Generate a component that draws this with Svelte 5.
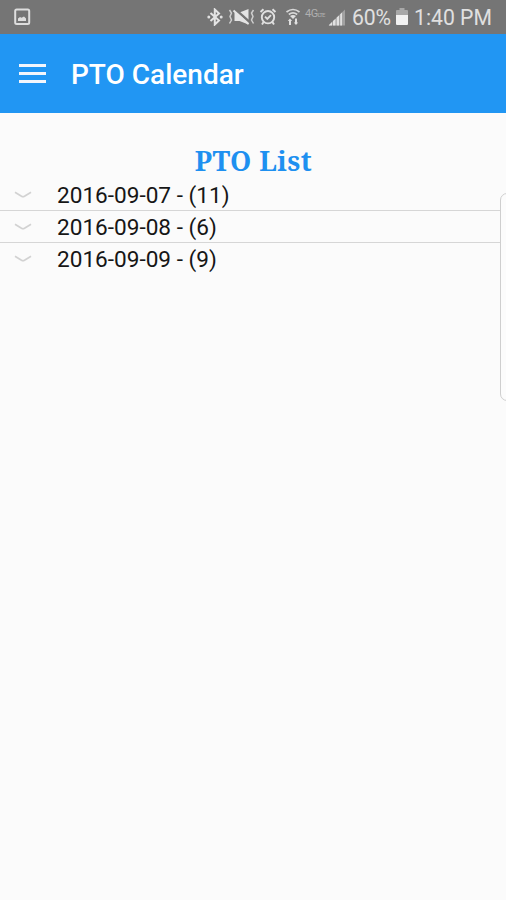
<script lang="ts">
  const battery = '60%';
  const time = '1:40 PM';

  const days = [
    { date: '2016-09-07', count: 11 },
    { date: '2016-09-08', count: 6 },
    { date: '2016-09-09', count: 9 }
  ];
</script>

<div class="screen">
  <div class="status-bar">
    <svg class="picture" width="17" height="18" viewBox="0 0 17 18">
      <rect x="1.2" y="1.500" width="14" height="14.500" rx="1.500" fill="none" stroke="#dedede" stroke-width="2" />
      <path d="M4 13v-2.500l2-1.500 1.500.8L10 8.500l2 2V13z" fill="#dedede" />
    </svg>

    <div class="status-icons">
      <svg class="bluetooth" width="18" height="18" viewBox="0 0 18 18">
        <path d="M4.500 5l8.500 7.500-4.200 4V1.500l4.200 4-8.500 7.500" fill="none" stroke="#e4e4e4" stroke-width="2" />
        <circle cx="2.800" cy="9" r="1.500" fill="#e0e0e0" />
        <circle cx="15.200" cy="9" r="1.500" fill="#e0e0e0" />
      </svg>
      <svg class="vibrate" width="27" height="18" viewBox="0 0 27 18">
        <path d="M1.500 2l2 3-1.500 3.500 1.500 3.500-2 3.500M25.500 2l-2 3 1.500 3.500-1.500 3.500 2 3.500" fill="none" stroke="#cfcfcf" stroke-width="1.500" />
        <path d="M6.500 4.500h5L20.500 1v15.500L11.500 13h-5z" fill="#e4e4e4" />
        <path d="M7.500 1.500L22 14.500" stroke="#757575" stroke-width="2.400" />
        <path d="M5.500 2.500L20.500 16" stroke="#e4e4e4" stroke-width="2" />
      </svg>
      <svg class="alarm" width="18" height="18" viewBox="0 0 18 18">
        <g fill="none" stroke="#e0e0e0" stroke-width="1.900">
          <circle cx="9" cy="9.200" r="6.200" />
          <path d="M1.500 4l3-2.800M16.500 4l-3-2.800M4.600 14l-1.600 2.500M13.400 14l1.600 2.500M6 8.700l2.300 2.300L12 7.200" />
        </g>
      </svg>
      <svg class="wifi" width="16" height="18" viewBox="0 0 16 18">
        <g fill="none" stroke="#d8d8d8" stroke-width="1.700">
          <path d="M1.500 4Q8-1 14.500 4M3.800 6.500q4.200-3.200 8.400 0" />
        </g>
        <path d="M5 8q3-2 6 0l-3 3z" fill="#e0e0e0" />
        <path d="M2.800 13l2.200-2.500L7.200 13H6v4H4v-4zM8.800 14.500H10v-4h2v4h1.200L11 17z" fill="#e0e0e0" />
      </svg>
      <span class="network">4G<span>LTE</span></span>
      <svg class="signal" width="18" height="18" viewBox="0 0 18 18">
        <path d="M.5 17.500L17 1.500v16z" fill="#a2a2a2" />
        <path d="M1 17.500V17l3-3v3.500zM5 17.500v-4.400L7.500 10.700v6.800zM8.700 17.500V9.600L11 7.400v10.100zM12.200 17.500V6.200L14 4.500v13z" fill="#e0e0e0" />
      </svg>
      <span class="percent">{battery}</span>
      <svg class="battery" width="12" height="18" viewBox="0 0 12 18">
        <path d="M3.500 0h5v2H11q1 0 1 1v4H0V3q0-1 1-1h2.500z" fill="#a8a8a8" />
        <path d="M0 7h12v9q0 1-1 1H1q-1 0-1-1z" fill="#f2f2f2" />
      </svg>
      <span class="time">{time}</span>
    </div>
  </div>

  <header class="app-bar">
    <button class="menu-button" aria-label="Menu">
      <span></span>
      <span></span>
      <span></span>
    </button>
    <h1>PTO Calendar</h1>
  </header>

  <main>
    <h2>PTO List</h2>
    <ul>
      {#each days as day}
        <li>
          <svg width="18" height="10" viewBox="0 0 18 10">
            <path d="M1 2.300l6.500 4q1.500.8 3 0L17 2.300" fill="none" stroke="#d2d2d2" stroke-width="1.700" />
          </svg>
          <span>{day.date} - ({day.count})</span>
        </li>
      {/each}
    </ul>
  </main>

  <!-- Edge panel handle, runs off the right side -->
  <div class="edge-handle"></div>
</div>

<style>
  :global(body) {
    margin: 0;
  }

  .screen {
    position: relative;
    width: 506px;
    height: 900px;
    overflow: hidden;
    background: #fbfbfb;
    font-family: Roboto, sans-serif;
  }

  .status-bar {
    display: flex;
    align-items: center;
    justify-content: space-between;
    box-sizing: border-box;
    height: 34px;
    padding: 0 14px;
    background: #757575;
    color: #e0e0e0;
  }

  .status-icons {
    display: flex;
    align-items: center;
    white-space: nowrap;
  }

  .status-icons svg {
    flex: none;
  }

  .vibrate {
    margin-left: 4px;
  }

  .alarm {
    margin-left: 4px;
  }

  .wifi {
    margin-left: 8px;
  }

  .network {
    width: 20px;
    margin: -5px 3px 0 4px;
    color: #b0b0b0;
    font-size: 11px;
    letter-spacing: -0.5px;
    line-height: 12px;
  }

  .network span {
    font-size: 6px;
    letter-spacing: -0.8px;
  }

  .percent,
  .time {
    font-size: 21.2px;
    line-height: 34px;
    padding-top: 2px;
  }

  .percent {
    width: 43px;
    margin-left: 6px;
    letter-spacing: -0.1px;
  }

  .battery {
    margin-left: 1px;
  }

  .time {
    width: 78px;
    margin-left: 6px;
  }

  .app-bar {
    display: flex;
    align-items: center;
    height: 79px;
    padding-left: 19px;
    background: #2196f3;
    color: #fff;
  }

  .menu-button {
    display: flex;
    flex-direction: column;
    gap: 5px;
    width: 27px;
    padding: 0;
    border: none;
    background: none;
  }

  .menu-button span {
    height: 3px;
    background: #f3f6fc;
  }

  h1 {
    margin: 3px 0 0 25px;
    font-size: 28px;
    font-weight: 500;
    line-height: 36px;
  }

  h2 {
    margin: 0;
    padding: 30px 0 0 1px;
    color: #1e90f0;
    font-family: 'Noto Serif', 'DejaVu Serif Condensed', 'DejaVu Serif', serif;
    font-size: 27px;
    font-weight: 700;
    letter-spacing: 0.45px;
    line-height: 36px;
    text-align: center;
  }

  ul {
    margin: 0;
    padding: 0;
    list-style: none;
  }

  li {
    display: flex;
    align-items: center;
    box-sizing: border-box;
    height: 32px;
    padding-left: 14px;
    border-bottom: 1px solid #d6d6d6;
    color: #161616;
    font-size: 22.600px;
  }

  li:last-child {
    height: 31px;
    border-bottom: none;
  }

  li span {
    margin: 2px 0 0 25px;
  }

  .edge-handle {
    position: absolute;
    top: 193px;
    right: -10px;
    box-sizing: border-box;
    width: 16px;
    height: 208px;
    border: 1px solid #cfcfcf;
    border-radius: 7px;
    background: #fcfcfc;
  }
</style>
